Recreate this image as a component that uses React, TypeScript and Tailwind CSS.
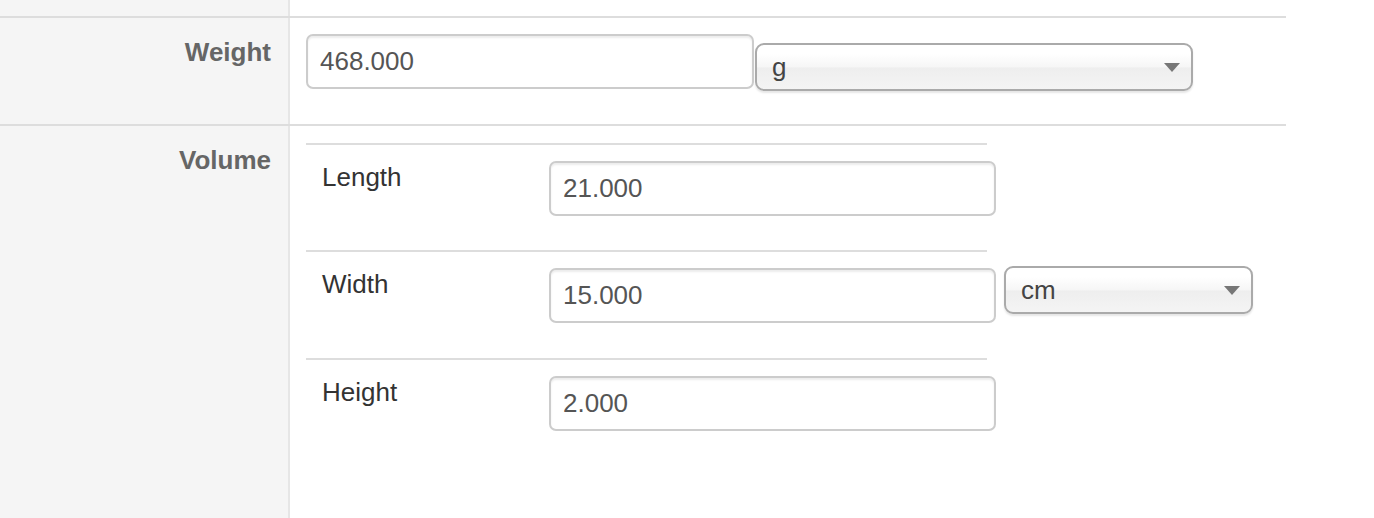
import React from 'react'

const font = { fontFamily: '"Liberation Sans", Arial, Helvetica, sans-serif' }

function Field({ value, className = '' }: { value: string; className?: string }) {
  return (
    <input
      readOnly
      defaultValue={value}
      className={`h-[55px] shrink-0 rounded-[7px] border-2 border-[#cccccc] bg-white pl-[12px] text-[26px] text-[#555555] shadow-[inset_0_2px_2px_rgba(0,0,0,0.075)] outline-none ${className}`}
    />
  )
}

function Chosen({ value, className = '' }: { value: string; className?: string }) {
  return (
    <div
      className={`flex h-[48px] shrink-0 items-center justify-between rounded-[9px] border-2 border-[#aaaaaa] bg-[linear-gradient(#ffffff_20%,#f6f6f6_50%,#eeeeee_52%,#f4f4f4_100%)] pl-[15px] pr-[11px] text-[26px] text-[#444444] shadow-[0_2px_2px_rgba(0,0,0,0.1)] ${className}`}
    >
      <span className="leading-none">{value}</span>
      <svg width="16" height="9" viewBox="0 0 16 9">
        <path d="M0 0 H16 L8 9 Z" fill="#777777" />
      </svg>
    </div>
  )
}

const rows = [
  { label: 'Length', value: '21.000', h: 'h-[107px]' },
  { label: 'Width', value: '15.000', h: 'h-[108px]', unit: 'cm' },
  { label: 'Height', value: '2.000', h: 'h-[108px]' },
]

export default function App() {
  return (
    <div className="h-[518px] w-[1374px] overflow-hidden bg-white" style={font}>
      <div className="w-[1286px]">
        {/* previous row remainder */}
        <div className="flex h-[18px] border-b-2 border-[#dddddd]">
          <div className="w-[290px] border-r-2 border-[#e6e6e6] bg-[#f5f5f5]" />
          <div className="flex-1" />
        </div>

        {/* weight */}
        <div className="flex h-[108px] border-b-2 border-[#dddddd]">
          <div className="w-[290px] border-r-2 border-[#e6e6e6] bg-[#f5f5f5] pr-[17px] pt-[16px] text-right text-[26px] font-bold leading-[36px] text-[#666666]">
            Weight
          </div>
          <div className="flex flex-1 items-start pl-[16px] pt-[16px]">
            <Field value="468.000" className="w-[448px]" />
            <Chosen value="g" className="ml-[1px] mt-[9px] w-[438px]" />
          </div>
        </div>

        {/* volume */}
        <div className="flex h-[400px]">
          <div className="w-[290px] border-r-2 border-[#e6e6e6] bg-[#f5f5f5] pr-[17px] pt-[16px] text-right text-[26px] font-bold leading-[36px] text-[#666666]">
            Volume
          </div>
          <div className="flex-1 pl-[16px] pt-[17px]">
            {rows.map((r) => (
              <div key={r.label} className={`flex w-[681px] items-start border-t-2 border-[#dddddd] ${r.h}`}>
                <div className="w-[243px] shrink-0 pl-[16px] pt-[14px] text-[26px] leading-[36px] text-[#333333]">
                  {r.label}
                </div>
                <Field value={r.value} className="mt-[16px] w-[447px]" />
                {r.unit && <Chosen value={r.unit} className="ml-[8px] mt-[14px] w-[249px]" />}
              </div>
            ))}
          </div>
        </div>
      </div>
    </div>
  )
}
